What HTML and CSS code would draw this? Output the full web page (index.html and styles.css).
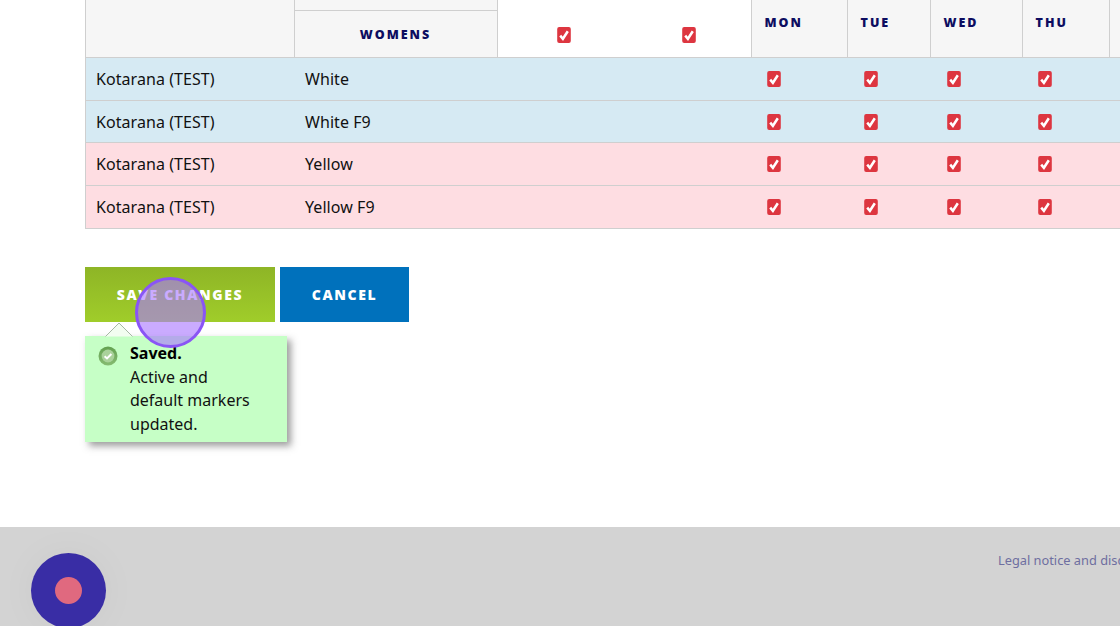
FILE: index.html
```html
<!DOCTYPE html>
<html lang="en">
<head>
<meta charset="utf-8">
<title>Markers</title>
<link rel="stylesheet" href="styles.css">
</head>
<body>
<svg class="defs" width="0" height="0" aria-hidden="true"><symbol id="chk" viewBox="0 0 14 16"><rect x="0.2" y="0" width="13.6" height="16" rx="2" fill="#dd3640"/><path d="M3.2 8.6 5.9 11.8 10.8 4.2" fill="none" stroke="#fff" stroke-width="2.5"/></symbol></svg>
<main class="main">
  <div class="table-wrap">
    <table class="grid">
      <colgroup>
        <col class="c1"><col class="c2"><col class="c3"><col class="c4"><col class="c5"><col class="c6"><col class="c7"><col class="c8"><col class="c9">
      </colgroup>
      <thead>
        <tr class="h1">
          <th class="hd" rowspan="2"></th>
          <th class="hd"></th>
          <th class="blank" rowspan="2"><svg class="cb"><use href="#chk"/></svg></th>
          <th class="blank" rowspan="2"><svg class="cb"><use href="#chk"/></svg></th>
          <th class="hd day" rowspan="2">MON</th>
          <th class="hd day" rowspan="2">TUE</th>
          <th class="hd day" rowspan="2">WED</th>
          <th class="hd day" rowspan="2">THU</th>
          <th class="hd day" rowspan="2"></th>
        </tr>
        <tr class="h2"><th class="hd womens">WOMENS</th></tr>
      </thead>
      <tbody>
        <tr class="blue r1"><td class="txt">Kotarana (TEST)</td><td class="txt">White</td><td></td><td></td><td class="ck"><svg class="cb"><use href="#chk"/></svg></td><td class="ck"><svg class="cb"><use href="#chk"/></svg></td><td class="ck"><svg class="cb"><use href="#chk"/></svg></td><td class="ck"><svg class="cb"><use href="#chk"/></svg></td><td></td></tr>
        <tr class="blue"><td class="txt">Kotarana (TEST)</td><td class="txt">White F9</td><td></td><td></td><td class="ck"><svg class="cb"><use href="#chk"/></svg></td><td class="ck"><svg class="cb"><use href="#chk"/></svg></td><td class="ck"><svg class="cb"><use href="#chk"/></svg></td><td class="ck"><svg class="cb"><use href="#chk"/></svg></td><td></td></tr>
        <tr class="pink"><td class="txt">Kotarana (TEST)</td><td class="txt">Yellow</td><td></td><td></td><td class="ck"><svg class="cb"><use href="#chk"/></svg></td><td class="ck"><svg class="cb"><use href="#chk"/></svg></td><td class="ck"><svg class="cb"><use href="#chk"/></svg></td><td class="ck"><svg class="cb"><use href="#chk"/></svg></td><td></td></tr>
        <tr class="pink"><td class="txt">Kotarana (TEST)</td><td class="txt">Yellow F9</td><td></td><td></td><td class="ck"><svg class="cb"><use href="#chk"/></svg></td><td class="ck"><svg class="cb"><use href="#chk"/></svg></td><td class="ck"><svg class="cb"><use href="#chk"/></svg></td><td class="ck"><svg class="cb"><use href="#chk"/></svg></td><td></td></tr>
      </tbody>
    </table>
  </div>
  <div class="actions">
    <button class="btn save" type="button">SAVE CHANGES</button>
    <button class="btn cancel" type="button">CANCEL</button>
    <div class="notice">
      <svg class="notice-arrow" width="28" height="15" viewBox="0 0 28 15"><path d="M0.5 14.5 14 1 27.5 14.5" fill="#f2fdf0" stroke="#a5b8a3"/></svg>
      <svg class="notice-icon" width="20" height="20" viewBox="0 0 20 20"><defs><linearGradient id="ng" x1="0" y1="0" x2="0" y2="1"><stop offset="0" stop-color="#63a150"/><stop offset="1" stop-color="#86bb72"/></linearGradient></defs><circle cx="10" cy="10" r="9.5" fill="url(#ng)"/><circle cx="10" cy="10" r="6.4" fill="#aad29b"/><path d="M6.6 10.2 9 12.4 13.4 8" fill="none" stroke="#fff" stroke-width="2"/></svg>
      <div class="notice-text"><strong>Saved.</strong><br>Active and<br>default markers<br>updated.</div>
    </div>
    <div class="cursor-dot"></div>
  </div>
</main>
<footer class="footer">
  <div class="fab"><span class="fab-dot"></span></div>
  <a class="legal">Legal notice and disclaimer</a>
</footer>
</body>
</html>
```
FILE: styles.css
```css
* { box-sizing: border-box; }
html, body { margin: 0; height: 626px; overflow: hidden; background: #fff; }
body { font-family: "Noto Sans", "Open Sans", sans-serif; color: #111; font-size: 16px; }
.defs { display: block; height: 0; }
.main { height: 527px; padding-left: 85px; overflow: hidden; }
.table-wrap { height: 229px; overflow: hidden; }
.grid { table-layout: fixed; width: 1135px; border-collapse: collapse; margin-top: -1px; }
.c1 { width: 208.5px; } .c2 { width: 203px; } .c3 { width: 130px; } .c4 { width: 124px; }
.c5 { width: 96px; } .c6 { width: 83px; } .c7 { width: 92px; } .c8 { width: 87px; } .c9 { width: 111.5px; }
th, td { padding: 0; border: 1px solid #cfcfcf; }
.h1 { height: 11px; }
.h2 { height: 47.3px; }
.hd { background: #f6f6f6; }
.blank { background: #fff; border-left: 0; border-right: 0; border-top: 0; vertical-align: top; padding-top: 26px; text-align: left; }
.blank:nth-of-type(3) { padding-left: 59px; }
.blank:nth-of-type(4) { padding-left: 55px; }
.day, .womens { font-family: "Open Sans", sans-serif; font-weight: 800; font-size: 12.5px; letter-spacing: 2px; color: #0d0d60; }
.day { text-align: left; vertical-align: top; padding: 14px 0 0 13px; }
.womens { text-align: center; }
.cb { display: block; width: 14px; height: 16px; }
.blank .cb { display: inline-block; }
tbody tr { height: 42.6px; }
.blue td { background: #d6eaf3; }
.pink td { background: #fedde2; }
tbody td { border-left: 0; border-right: 0; }
tbody td:first-child { border-left: 1px solid #cfcfcf; }
.txt { padding-left: 10px; letter-spacing: .06px; }
.txt + .txt { padding-left: 11px; }
.ck { padding-left: 16px; }
.ck:nth-child(6), .ck:nth-child(7) { padding-left: 17px; }
.actions { position: relative; display: flex; gap: 5px; margin-top: 38px; }
.btn { height: 55px; border: 0; color: #fff; font-family: "Open Sans", sans-serif; font-weight: 800; font-size: 14px; letter-spacing: 1.6px; padding: 0; }
.save { width: 190px; background: linear-gradient(#8eb526, #a0cd2a); }
.cancel { width: 129px; background: #0071bc; }
.notice { position: absolute; left: 0; top: 69px; width: 202px; height: 106px; background: #c6ffc6; box-shadow: 4px 4px 7px rgba(60,60,60,.5); }
.notice-arrow { position: absolute; left: 20px; top: -14px; }
.notice-icon { position: absolute; left: 13px; top: 10px; }
.notice-text { position: absolute; left: 45px; top: 6px; font-size: 16px; line-height: 23.5px; color: #111; white-space: nowrap; }
.notice-text strong { font-weight: 700; color: #000; }
.cursor-dot { position: absolute; left: 50px; top: 10px; width: 71px; height: 71px; border-radius: 50%; border: 3px solid #8a55f5; background: rgba(170,120,255,.62); }
.footer { position: relative; height: 99px; background: #d3d3d3; display: flex; justify-content: flex-start; padding-left: 998px; }
.legal { margin-top: 24px; font-size: 12.8px; line-height: 18px; color: #6e6ea0; white-space: nowrap; }
.fab { position: absolute; left: 31px; top: 26px; width: 75px; height: 75px; border-radius: 50%; background: #392da5; display: flex; align-items: center; justify-content: center; box-shadow: 0 0 40px rgba(0,0,0,.04); }
.fab-dot { width: 27px; height: 27px; border-radius: 50%; background: #e0697f; }
```
